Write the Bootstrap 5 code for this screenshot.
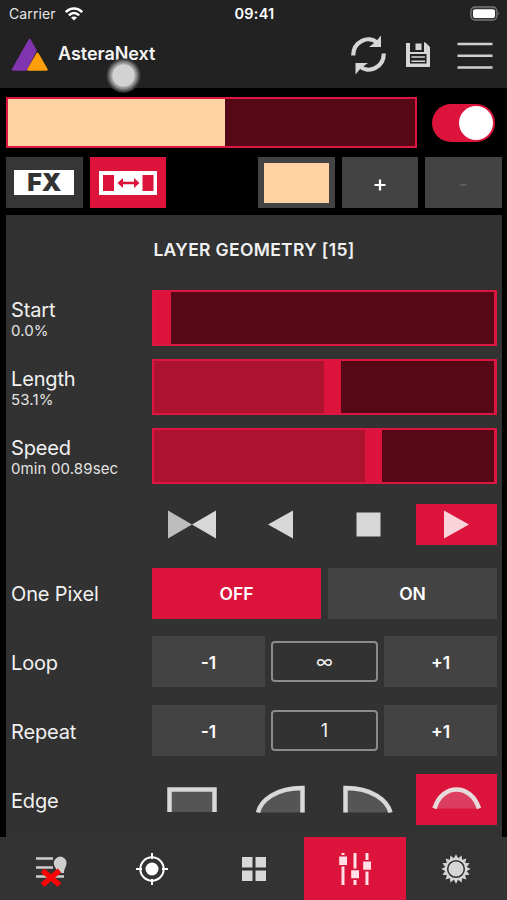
<!DOCTYPE html>
<html lang="en">
<head>
<meta charset="utf-8">
<meta name="viewport" content="width=device-width, initial-scale=1">
<title>AsteraNext</title>
<link href="https://cdn.jsdelivr.net/npm/bootstrap@5.3.0/dist/css/bootstrap.min.css" rel="stylesheet">
<style>
body{background:#000;color:#f1f1f1;font-family:Inter,"Liberation Sans",sans-serif;width:507px;height:900px;overflow:hidden}
svg{display:block;flex:none}
.topbar{background:#222;height:88px}
.status{height:27px;font-size:13px;color:#e6e6e6;padding:0 7px 0 9px}
.status > div{flex:1 1 0}
.carrier{font-size:14px;letter-spacing:.1px}
.clock{font-weight:600;font-size:14.5px;letter-spacing:.2px;color:#fff}
.brand-row{height:55px;padding:0 14px 0 11px}
.brand-name{font-size:18px;font-weight:600;letter-spacing:-.05px;margin:-2px 0 0 10px;color:#f4f4f4}
.save{margin:0 26px 0 18px}
.touch{left:106px;top:58px;width:35px;height:35px;border-radius:50%;background:radial-gradient(circle,#d2d2d2 0 10.5px,#a0a0a0 12px,#858585 13.5px,#565656 15px,#3a3a3a 16.5px,#2225 17.5px)}
.main{padding:9px 5.5px 0 6px;height:749px}
.preview{width:411px;height:51px;border:2px solid #dc1640;background:#570817}
.preview-fill{background:#ffd2a3;width:217px}
.toggle{width:63px;height:38px;border-radius:19px;background:#dc143c;padding:2px;margin-right:6.5px}
.knob{width:34px;height:34px;border-radius:50%;background:#fff}
.tools{gap:7px;margin:9px 0 7px}
.tile{width:76.5px;height:51px;border-radius:0;border:0;padding:0;color:#fff;background:#434343}
.tile.dark{background:#363636}
.slot.on,.key.on,.tab.on,.tile.on{background:#dc143c}
.fx{width:60px;height:25px;background:#fff;color:#333;font:900 25px/25px Inter,sans-serif;letter-spacing:-.2px;text-align:center}
.swatch{width:65px;height:40px;background:#ffd2a3}
.panel{background:#323232;height:622px;padding:0 4.500px 0 5px}
.heading{font-size:17.5px;font-weight:600;letter-spacing:.33px;height:75px;padding-top:8px;margin:0}
.field{height:56px;margin-bottom:12.8px}
.field-label{width:141px;font-size:20px;line-height:24px;letter-spacing:-.15px;padding-top:2px}
.field-label small{display:block;font-size:15px;line-height:18px;letter-spacing:.12px;color:#e2e2e2}
.control{width:345px}
.slider{height:56px;border:2.5px solid #dc1640;border-right-width:3.5px;background:#570817}
.slider-fill{background:#ad122e}
.slider-grip{width:17px;background:#dc143c}
.slots{gap:7px}
.slot{width:81px}
.slot.short{height:41px}
.slot.tall,.key{height:51px}
.key{background:#434343;color:#fff;border:0;border-radius:0;padding:2px 0 0;font-size:17.5px;font-weight:600;flex:1 1 0}
.value{width:107px;height:41px;border:2px solid #8b8b8b;border-radius:4px;font-size:18px;margin:0 6px 1px;padding-top:1px}
.tabs{height:63px;background:#333}
.tab{flex:1 1 0}
</style>
</head>
<body>
<header class="topbar position-relative">
  <div class="status d-flex align-items-center">
    <div class="d-flex align-items-center"><span class="carrier me-1">Carrier</span>
      <svg class="ms-1" width="20" height="16" viewBox="0 0 20 16" fill="none" stroke="#fff" stroke-width="2.6"><path d="M1.8 6.2C6.5 1.2 13.5 1.2 18.2 6.2M4.9 9.3c3-3 7.200-3 10.200 0"/><path d="M10 14.500 7 11.500c1.800-1.500 4.200-1.500 6 0z" fill="#fff" stroke="none"/></svg>
    </div>
    <div class="clock text-center">09:41</div>
    <div class="d-flex justify-content-end"><svg width="31" height="16" viewBox="0 0 31 16"><rect x="1.900" y="1" width="26" height="13" rx="4" fill="#333" stroke="#777" stroke-width="1.300"/><rect x="4" y="3.200" width="22" height="8.800" rx="2" fill="#fff"/><path d="M29.300 5.500q1.800 2 0 4z" fill="#777"/></svg></div>
  </div>
  <div class="brand-row d-flex align-items-center">
    <svg width="37" height="34" viewBox="0 0 37 34" stroke-linejoin="round"><path d="M18.700 2 24.500 12.500 15 31.500H2z" fill="#8034ae" stroke="#8034ae" stroke-width="2.500"/><path d="M26.500 15.800 35.500 31.500H17.500z" fill="#ff9e0b" stroke="#ff9e0b" stroke-width="2.500"/></svg>
    <span class="brand-name">AsteraNext</span>
    <svg class="ms-auto" width="37" height="40" viewBox="0 0 37 40"><g fill="none" stroke="#d6d6d6" stroke-width="4.200"><path d="M3.200 20.500C3.200 6.500 18.500-.5 27.500 8"/><path d="M33.800 18.500c0 14-15.300 21-24.300 12.500"/></g><path d="M31 .5V12L19 12 25.500 7zM5.500 39.500V28L18 28 11 33z" fill="#d6d6d6"/></svg>
    <svg class="save" width="26" height="26" viewBox="0 0 26 26"><path d="M1 1h4v9h16V1l4 4v20H1z" fill="#d6d6d6"/><path d="M5 1h16v8.500H5z" fill="#222"/><path d="M10.500 1.500h6V8h-6zM19 0l2 1v9h-2z" fill="#d6d6d6"/><path d="M5 12h16.500V21.500H5z" fill="#222"/><path d="M6.500 15h13.500M6.500 19.300h13.500" stroke="#d6d6d6" stroke-width="1.500"/></svg>
    <svg width="36" height="30" viewBox="0 0 36 30" stroke="#cfcfcf" stroke-width="2.400"><path d="M.5 4h35M.5 15.800h35M.5 27.500h35"/></svg>
  </div>
  <div class="touch position-absolute"></div>
</header>

<main class="main">
  <div class="d-flex align-items-center justify-content-between">
    <div class="preview d-flex"><div class="preview-fill"></div></div>
    <div class="toggle d-flex justify-content-end"><div class="knob"></div></div>
  </div>
  <div class="tools d-flex">
    <button class="tile dark btn d-flex align-items-center justify-content-center"><span class="fx">FX</span></button>
    <button class="tile on btn d-flex align-items-center justify-content-center">
      <svg width="58" height="24" viewBox="0 0 58 24"><path d="M0 0h58v24H0z" fill="#fff"/><path d="M4 4h11v16H4zM43.500 4h11v16h-11zM18.500 12l5.500-5v3.700h11V7l5.500 5-5.500 5v-3.700H24V17z" fill="#dc143c"/></svg></button>
    <button class="tile btn ms-auto d-flex align-items-center justify-content-center"><span class="swatch"></span></button>
    <button class="tile btn d-flex align-items-center justify-content-center"><svg class="mt-1" width="12" height="12" viewBox="0 0 12 12" stroke="#fff" stroke-width="2.200"><path d="M6 .5v11M.5 6h11"/></svg></button>
    <button class="tile btn d-flex align-items-center justify-content-center"><svg class="mt-1" width="7" height="4" viewBox="0 0 7 4"><path d="M.5 2h6" stroke="#666" stroke-width="1.500"/></svg></button>
  </div>

  <section class="panel">
    <h1 class="heading d-flex justify-content-center"><span class="pt-3">LAYER GEOMETRY [15]</span></h1>
    <div class="field d-flex align-items-center">
      <div class="field-label">Start<small>0.0%</small></div>
      <div class="control slider d-flex"><div class="slider-grip"></div></div>
    </div>
    <div class="field d-flex align-items-center">
      <div class="field-label">Length<small>53.1%</small></div>
      <div class="control slider d-flex"><div class="slider-fill" style="width:50%"></div><div class="slider-grip"></div></div>
    </div>
    <div class="field d-flex align-items-center">
      <div class="field-label">Speed<small>0min 00.89sec</small></div>
      <div class="control slider d-flex"><div class="slider-fill" style="width:62.2%"></div><div class="slider-grip"></div></div>
    </div>
    <div class="field d-flex align-items-center">
      <div class="field-label"></div>
      <div class="control slots d-flex">
        <div class="slot short"><svg width="81" height="41"><path d="M16 6.500v28l24-14z" fill="#bdbdbd"/><path d="M64 6.500v28l-24-14z" fill="#d8d8d8"/></svg></div>
        <div class="slot short"><svg width="81" height="41"><path d="M53 6.500v28l-25-14z" fill="#d8d8d8"/></svg></div>
        <div class="slot short"><svg width="81" height="41"><path d="M28.500 8.500h24v24h-24z" fill="#d8d8d8"/></svg></div>
        <div class="slot short on"><svg width="81" height="41"><path d="M28 6.500v28l25-14z" fill="#f9d2da"/></svg></div>
      </div>
    </div>
    <div class="field d-flex align-items-center">
      <div class="field-label">One Pixel</div>
      <div class="control slots d-flex"><button class="key on btn">OFF</button><button class="key btn">ON</button></div>
    </div>
    <div class="field d-flex align-items-center">
      <div class="field-label">Loop</div>
      <div class="control d-flex align-items-center"><button class="key btn">-1</button><div class="value d-flex align-items-center justify-content-center">∞</div><button class="key btn">+1</button></div>
    </div>
    <div class="field d-flex align-items-center">
      <div class="field-label">Repeat</div>
      <div class="control d-flex align-items-center"><button class="key btn">-1</button><div class="value d-flex align-items-center justify-content-center">1</div><button class="key btn">+1</button></div>
    </div>
    <div class="field d-flex align-items-center">
      <div class="field-label">Edge</div>
      <div class="control slots d-flex">
        <div class="slot tall"><svg width="81" height="51" fill="#555" stroke="#d8d8d8" stroke-width="4.500"><path d="M17.500 38V15.500h45V38"/></svg></div>
        <div class="slot tall"><svg width="81" height="51" fill="#555" stroke="#d8d8d8" stroke-width="4.500"><path d="M18 38.500C21 26 36 14 62.500 14V38.500"/></svg></div>
        <div class="slot tall"><svg width="81" height="51" fill="#555" stroke="#d8d8d8" stroke-width="4.500"><path d="M17.500 38.500V14C44 14 59 26 62.500 38.500"/></svg></div>
        <div class="slot tall on"><svg width="81" height="51" fill="#dc3e5f" stroke="#e6dada" stroke-width="4.500"><path d="M18.500 34.500C26 9 55 9 63 34.500"/></svg></div>
      </div>
    </div>
  </section>
</main>

<nav class="tabs d-flex">
  <div class="tab d-flex align-items-center justify-content-center"><svg width="32" height="38" viewBox="0 0 32 38"><path d="M1 8.500h17M1 17.500h17M1 26.500h28" stroke="#cfcfcf" stroke-width="2.300"/><path d="M25.500 6.500a6.700 6.700 0 0 1 6 6.500c0 4-2.500 5-2.500 10h-7c0-5-3.200-6-3.200-10a6.700 6.700 0 0 1 6.700-6.500z" fill="#cfcfcf"/><path d="M7.500 20.500 24.500 35M24.500 20.500 7.500 35" stroke="#f90505" stroke-width="5.500"/></svg></div>
  <div class="tab d-flex align-items-center justify-content-center"><svg width="32" height="32" viewBox="0 0 32 32" fill="none" stroke="#fff" stroke-width="2"><circle cx="16" cy="16" r="11.700"/><circle cx="16" cy="16" r="6.500" fill="#fff" stroke="none"/><path d="M16 0v6M16 26v6M0 16h6M26 16h6"/></svg></div>
  <div class="tab d-flex align-items-center justify-content-center"><svg width="24" height="24" viewBox="0 0 24 24" fill="#d8d8d8"><path d="M0 0h10.500v10.500H0zM13.500 0H24v10.500H13.500zM0 13.500h10.500V24H0zM13.500 13.500H24V24H13.500z"/></svg></div>
  <div class="tab on d-flex align-items-center justify-content-center"><svg width="32" height="32" viewBox="0 0 32 32" fill="#ffe0e6"><path d="M2.500 0h3v2h-3zM.2 3.500h7.800v8.500H.2zM2.500 13.500h3V32h-3zM14.500 0h3v15.500h-3zM12.200 17.200H20v8h-7.800zM14.500 27h3v5h-3zM26.500 0h3v7h-3zM24.200 8.500H32v8.200h-7.800zM26.500 18.500h3V32h-3z"/></svg></div>
  <div class="tab d-flex align-items-center justify-content-center"><svg width="30" height="30" viewBox="-15 -15 30 30"><g fill="#d6d6d6"><path id="ray" d="M-2.800-9.500 0-14.700 2.800-9.500zM-2.800 9.500 0 14.700 2.800 9.500z"/><use href="#ray" transform="rotate(22.500)"/><use href="#ray" transform="rotate(45)"/><use href="#ray" transform="rotate(67.500)"/><use href="#ray" transform="rotate(90)"/><use href="#ray" transform="rotate(112.500)"/><use href="#ray" transform="rotate(135)"/><use href="#ray" transform="rotate(157.500)"/></g><circle r="10.500" fill="#d6d6d6"/><circle r="8.300" fill="#d6d6d6" stroke="#333" stroke-width="1.500"/></svg></div>
</nav>
<script src="https://cdn.jsdelivr.net/npm/bootstrap@5.3.0/dist/js/bootstrap.bundle.min.js"></script>
</body>
</html>
